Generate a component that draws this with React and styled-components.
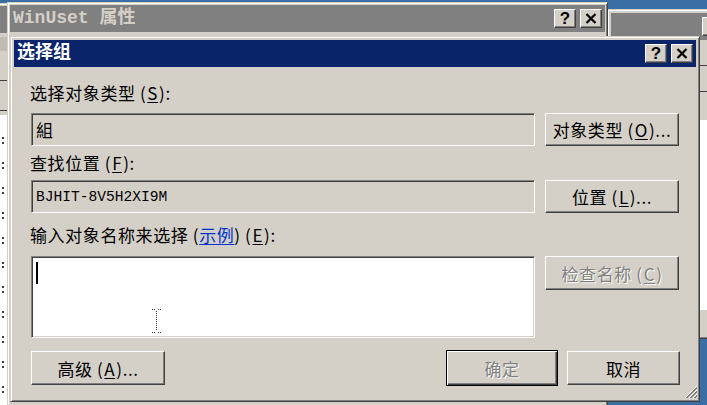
import React from "react";
import styled, { createGlobalStyle } from "styled-components";

const GlobalStyle = createGlobalStyle`
  html, body {
    margin: 0;
    padding: 0;
    background: #3a6ea5;
  }
  body {
    font-family: "Noto Sans CJK SC", "Noto Sans", sans-serif;
  }
`;

const Desktop = styled.div`
  position: relative;
  width: 707px;
  height: 405px;
  overflow: hidden;
  background: #3a6ea5;
`;

const Window = styled.div`
  position: absolute;
  left: ${({ $x }) => $x}px;
  top: ${({ $y }) => $y}px;
  width: ${({ $w }) => $w}px;
  height: ${({ $h }) => $h}px;
  box-sizing: border-box;
  display: flex;
  flex-direction: column;
  padding: ${({ $pad }) => $pad ?? 3}px;
  background: #d4d0c8;
  border: 1px solid;
  border-color: #d4d0c8 #404040 #404040 #d4d0c8;
  box-shadow: inset 1px 1px #fff, inset -1px -1px #808080;
`;

const TitleBar = styled.div`
  flex: none;
  height: 27px;
  display: flex;
  align-items: center;
  justify-content: ${({ $end }) => ($end ? "flex-end" : "space-between")};
  padding: 0 3px;
  background: ${({ $active }) => ($active ? "#0a246a" : "#808080")};
  color: ${({ $active }) => ($active ? "#fff" : "#d4d0c8")};
`;

const TitleText = styled.span`
  font-family: "Liberation Mono", "Noto Sans CJK SC", monospace;
  font-weight: bold;
  font-size: 18px;
  line-height: 27px;
  white-space: nowrap;
`;

const CaptionButtons = styled.div`
  display: flex;
  gap: 4px;
`;

const CaptionButton = styled.div`
  width: 22px;
  height: 19px;
  box-sizing: border-box;
  display: flex;
  align-items: center;
  justify-content: center;
  background: #d4d0c8;
  border: 1px solid;
  border-color: #fff #404040 #404040 #fff;
  box-shadow: inset -1px -1px #808080;
  color: #000;
  font-family: "Liberation Sans", sans-serif;
  font-weight: bold;
  font-size: 17px;
  line-height: 1;
`;

const DialogBody = styled.div`
  flex: 1;
  display: flex;
  flex-direction: column;
  padding: 16px 17px 0;
  font-size: 17px;
  letter-spacing: 0.6px;
  color: #000;
`;

const Label = styled.div`
  height: 20px;
  line-height: 20px;
  margin-top: ${({ $mt }) => $mt || 0}px;
  margin-left: -1px;
  white-space: nowrap;
`;

const Key = styled.u`
  margin: 0 1px;
  text-underline-offset: 2px;
`;

const Link = styled.span`
  color: #0033cc;
  text-decoration: underline;
  text-underline-offset: 2px;
`;

const Row = styled.div`
  display: flex;
  align-items: flex-start;
  gap: 10px;
  margin-top: ${({ $mt }) => $mt || 0}px;
`;

const Field = styled.div`
  position: relative;
  width: 504px;
  height: ${({ $h }) => $h}px;
  box-sizing: border-box;
  display: flex;
  align-items: ${({ $top }) => ($top ? "flex-start" : "center")};
  padding: 0 4px;
  background: ${({ $white }) => ($white ? "#fff" : "#d4d0c8")};
  border: 1px solid;
  border-color: #808080 #fff #fff #808080;
  box-shadow: inset 1px 1px #404040, inset -1px -1px #d4d0c8;
  font-family: ${({ $mono }) =>
    $mono ? '"Liberation Mono", monospace' : '"Noto Sans CJK SC", sans-serif'};
  font-size: ${({ $mono }) => ($mono ? "14.6px" : "17px")};
  letter-spacing: 0;
  white-space: nowrap;
`;

const Caret = styled.span`
  width: 2px;
  height: 22px;
  margin-top: 5px;
  background: #000;
`;

const Button = styled.div`
  width: ${({ $w }) => $w}px;
  height: ${({ $h }) => $h}px;
  box-sizing: border-box;
  display: flex;
  align-items: center;
  justify-content: center;
  background: #d4d0c8;
  border: 1px solid;
  border-color: ${({ $default }) =>
    $default ? "#000" : "#fff #404040 #404040 #fff"};
  box-shadow: ${({ $default }) =>
    $default
      ? "inset 1px 1px #fff, inset -1px -1px #404040, inset -2px -2px #808080"
      : "inset -1px -1px #808080"};
  color: ${({ $disabled }) => ($disabled ? "#808080" : "#000")};
  text-shadow: ${({ $disabled }) => ($disabled ? "1px 1px #fff" : "none")};
  white-space: nowrap;
`;

const ButtonBar = styled.div`
  display: flex;
  align-items: center;
  justify-content: space-between;
  margin-top: 12px;
  margin-right: -1px;
`;

const ButtonGroup = styled.div`
  display: flex;
  align-items: center;
  gap: 9px;
`;

const Overlay = styled.div`
  position: absolute;
  left: ${({ $x }) => $x}px;
  top: ${({ $y }) => $y}px;
  line-height: 0;
`;

const BackBody = styled.div`
  flex: 1;
  display: flex;
  flex-direction: column;
`;

const Strip = styled.div`
  width: 100%;
  height: ${({ $h }) => $h}px;
  margin-top: ${({ $mt }) => $mt || 0}px;
  box-sizing: border-box;
  background: ${({ $bg }) => $bg || "transparent"};
  border-bottom: ${({ $line }) => ($line ? "1px solid #404040" : "none")};
`;

const ListBox = styled.div`
  width: 100%;
  height: ${({ $h }) => $h}px;
  margin-top: ${({ $mt }) => $mt || 0}px;
  box-sizing: border-box;
  display: flex;
  flex-direction: column;
  align-items: ${({ $right }) => ($right ? "flex-end" : "flex-start")};
  gap: 18px;
  padding: 22px 3px;
  background: #fff;
`;

const Mark = styled.span`
  width: 0;
  height: 8px;
  border-left: 2px dotted #404040;
`;

const HelpIcon = () => <span>?</span>;

const CloseIcon = () => (
  <svg width="12" height="11" viewBox="0 0 12 11">
    <path d="M1.5 1 L10.5 10 M10.5 1 L1.5 10" stroke="#000" strokeWidth="2.2" />
  </svg>
);

const IBeam = () => (
  <svg width="11" height="26" viewBox="0 0 11 26">
    <g fill="#333">
      {[1, 3, 7, 9].map((x) => (
        <rect key={"t" + x} x={x} y="1" width="1" height="1" />
      ))}
      {[1, 3, 7, 9].map((x) => (
        <rect key={"b" + x} x={x} y="24" width="1" height="1" />
      ))}
      {[3, 5, 7, 9, 11, 13, 15, 17, 19, 21].map((y) => (
        <rect key={"m" + y} x="5" y={y} width="1" height="1" />
      ))}
    </g>
  </svg>
);

const ResizeGrip = () => (
  <svg width="15" height="15" viewBox="0 0 15 15">
    <g strokeWidth="1">
      <path d="M14 2 L2 14" stroke="#fff" />
      <path d="M14 3 L3 14 M14 4 L4 14" stroke="#808080" />
      <path d="M14 6 L6 14" stroke="#fff" />
      <path d="M14 7 L7 14 M14 8 L8 14" stroke="#808080" />
      <path d="M14 10 L10 14" stroke="#fff" />
      <path d="M14 11 L11 14 M14 12 L12 14" stroke="#808080" />
    </g>
  </svg>
);

const Caption = ({ active, children }) => (
  <TitleBar $active={active}>
    <TitleText>{children}</TitleText>
    <CaptionButtons>
      <CaptionButton>
        <HelpIcon />
      </CaptionButton>
      <CaptionButton>
        <CloseIcon />
      </CaptionButton>
    </CaptionButtons>
  </TitleBar>
);

const marks = Array.from({ length: 11 }, (_, i) => i);

export default function App() {
  return (
    <Desktop>
      <GlobalStyle />

      <Window $x={-100} $y={3} $w={110} $h={420} $pad={2}>
        <TitleBar />
        <BackBody>
          <Strip $h={14} $mt={4} $bg="#c0bcb4" />
          <Strip $h={30} $line />
          <Strip $h={30} $line />
          <ListBox $h={300} $mt={4} $right>
            {marks.map((i) => (
              <Mark key={i} />
            ))}
          </ListBox>
        </BackBody>
      </Window>

      <Window $x={607} $y={9} $w={124} $h={330}>
        <TitleBar $end>
          <CaptionButton />
        </TitleBar>
        <BackBody>
          <Strip $h={26} $line />
          <Strip $h={26} $line />
          <ListBox $h={190} $mt={28}>
            {marks.slice(0, 8).map((i) => (
              <Mark key={i} />
            ))}
          </ListBox>
        </BackBody>
      </Window>

      <Window $x={7} $y={2} $w={601} $h={420} $pad={2}>
        <Caption>WinUset 属性</Caption>
      </Window>

      <Window $x={10} $y={36} $w={690} $h={366}>
        <Caption active>选择组</Caption>
        <DialogBody>
          <Label>
            选择对象类型 (<Key>S</Key>):
          </Label>
          <Row $mt={10}>
            <Field $h={33}>組</Field>
            <Button $w={134} $h={33}>
              对象类型 (<Key>O</Key>)...
            </Button>
          </Row>

          <Label $mt={7}>
            查找位置 (<Key>F</Key>):
          </Label>
          <Row $mt={7}>
            <Field $h={33} $mono>
              BJHIT-8V5H2XI9M
            </Field>
            <Button $w={134} $h={33}>
              位置 (<Key>L</Key>)...
            </Button>
          </Row>

          <Label $mt={12}>
            输入对象名称来选择 (<Link>示例</Link>) (<Key>E</Key>):
          </Label>
          <Row $mt={11}>
            <Field $h={82} $white $top>
              <Caret />
              <Overlay $x={119} $y={51}>
                <IBeam />
              </Overlay>
            </Field>
            <Button $w={134} $h={34} $disabled>
              检查名称 (<Key>C</Key>)
            </Button>
          </Row>

          <ButtonBar>
            <Button $w={134} $h={34}>
              高级 (<Key>A</Key>)...
            </Button>
            <ButtonGroup>
              <Button $w={112} $h={36} $default $disabled>
                确定
              </Button>
              <Button $w={113} $h={34}>
                取消
              </Button>
            </ButtonGroup>
          </ButtonBar>
        </DialogBody>
        <Overlay $x={672} $y={347}>
          <ResizeGrip />
        </Overlay>
      </Window>
    </Desktop>
  );
}
